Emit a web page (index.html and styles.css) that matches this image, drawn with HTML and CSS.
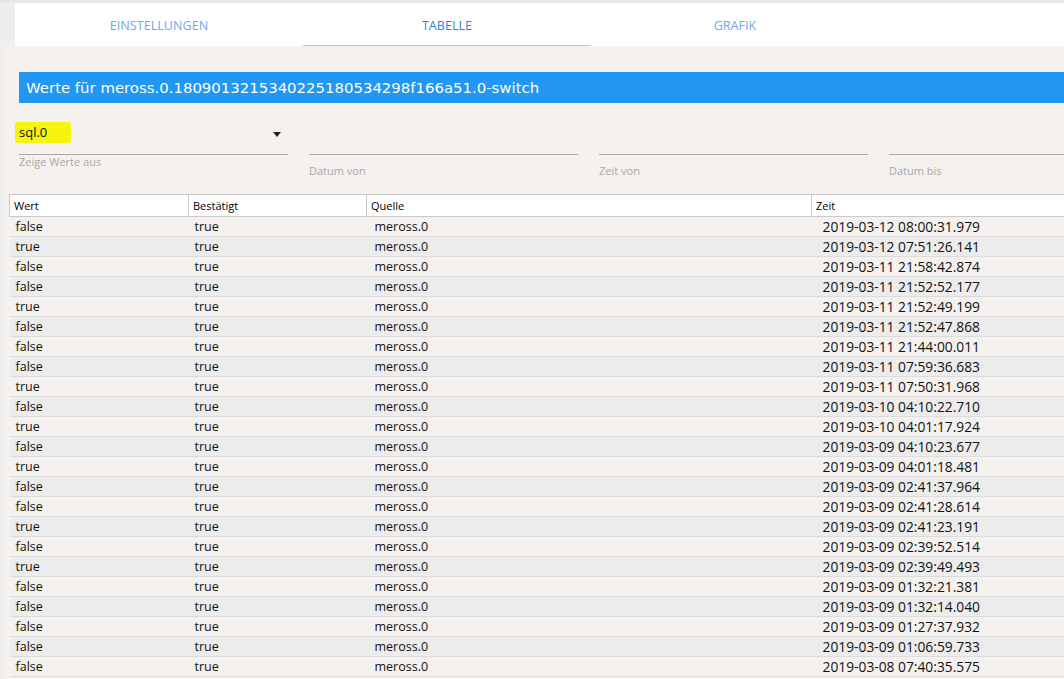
FILE: index.html
```html
<!DOCTYPE html>
<html>
<head>
<meta charset="utf-8">
<link rel="stylesheet" href="styles.css">
</head>
<body>
<div class="top-strip"></div>
<div class="tabs">
  <div class="tab">EINSTELLUNGEN</div>
  <div class="tab active">TABELLE</div>
  <div class="tab">GRAFIK</div>
</div>
<div class="panel">
  <div class="title">Werte für meross.0.1809013215340225180534298f166a51.0-switch</div>
  <div class="filters">
    <div class="field select-field">
      <div class="select-value"><span class="hl">sql.0</span><span class="arrow"></span></div>
      <div class="line"></div>
      <div class="label">Zeige Werte aus</div>
    </div>
    <div class="field">
      <div class="line"></div>
      <div class="label low">Datum von</div>
    </div>
    <div class="field">
      <div class="line"></div>
      <div class="label low">Zeit von</div>
    </div>
    <div class="field">
      <div class="line"></div>
      <div class="label low">Datum bis</div>
    </div>
  </div>
  <div class="table-wrap">
  <table class="grid">
    <colgroup><col class="c1"><col class="c2"><col class="c3"><col class="c4"></colgroup>
    <thead>
      <tr><th>Wert</th><th>Bestätigt</th><th>Quelle</th><th>Zeit</th></tr>
    </thead>
    <tbody>
      <tr><td>false</td><td>true</td><td class="q">meross.0</td><td class="t">2019-03-12 08:00:31.979</td></tr>
      <tr><td>true</td><td>true</td><td class="q">meross.0</td><td class="t">2019-03-12 07:51:26.141</td></tr>
      <tr><td>false</td><td>true</td><td class="q">meross.0</td><td class="t">2019-03-11 21:58:42.874</td></tr>
      <tr><td>false</td><td>true</td><td class="q">meross.0</td><td class="t">2019-03-11 21:52:52.177</td></tr>
      <tr><td>true</td><td>true</td><td class="q">meross.0</td><td class="t">2019-03-11 21:52:49.199</td></tr>
      <tr><td>false</td><td>true</td><td class="q">meross.0</td><td class="t">2019-03-11 21:52:47.868</td></tr>
      <tr><td>false</td><td>true</td><td class="q">meross.0</td><td class="t">2019-03-11 21:44:00.011</td></tr>
      <tr><td>false</td><td>true</td><td class="q">meross.0</td><td class="t">2019-03-11 07:59:36.683</td></tr>
      <tr><td>true</td><td>true</td><td class="q">meross.0</td><td class="t">2019-03-11 07:50:31.968</td></tr>
      <tr><td>false</td><td>true</td><td class="q">meross.0</td><td class="t">2019-03-10 04:10:22.710</td></tr>
      <tr><td>true</td><td>true</td><td class="q">meross.0</td><td class="t">2019-03-10 04:01:17.924</td></tr>
      <tr><td>false</td><td>true</td><td class="q">meross.0</td><td class="t">2019-03-09 04:10:23.677</td></tr>
      <tr><td>true</td><td>true</td><td class="q">meross.0</td><td class="t">2019-03-09 04:01:18.481</td></tr>
      <tr><td>false</td><td>true</td><td class="q">meross.0</td><td class="t">2019-03-09 02:41:37.964</td></tr>
      <tr><td>false</td><td>true</td><td class="q">meross.0</td><td class="t">2019-03-09 02:41:28.614</td></tr>
      <tr><td>true</td><td>true</td><td class="q">meross.0</td><td class="t">2019-03-09 02:41:23.191</td></tr>
      <tr><td>false</td><td>true</td><td class="q">meross.0</td><td class="t">2019-03-09 02:39:52.514</td></tr>
      <tr><td>true</td><td>true</td><td class="q">meross.0</td><td class="t">2019-03-09 02:39:49.493</td></tr>
      <tr><td>false</td><td>true</td><td class="q">meross.0</td><td class="t">2019-03-09 01:32:21.381</td></tr>
      <tr><td>false</td><td>true</td><td class="q">meross.0</td><td class="t">2019-03-09 01:32:14.040</td></tr>
      <tr><td>false</td><td>true</td><td class="q">meross.0</td><td class="t">2019-03-09 01:27:37.932</td></tr>
      <tr><td>false</td><td>true</td><td class="q">meross.0</td><td class="t">2019-03-09 01:06:59.733</td></tr>
      <tr><td>false</td><td>true</td><td class="q">meross.0</td><td class="t">2019-03-08 07:40:35.575</td></tr>
    </tbody>
  </table>
  </div>
</div>
</body>
</html>
```

FILE: styles.css
```css
html, body {
  margin: 0;
  padding: 0;
  height: 100%;
  overflow: hidden;
}
body {
  background: #eeeeee;
  font-family: "Open Sans", "Noto Sans", sans-serif;
  color: #111;
}
.top-strip {
  height: 3px;
  background: #e6e6e6;
}
.tabs {
  display: flex;
  margin-left: 15px;
  height: 43px;
  background: #ffffff;
}
.tab {
  width: 288px;
  box-sizing: border-box;
  text-align: center;
  font-size: 12.6px;
  line-height: 46px;
  color: #6aaaf0;
}
.tab.active {
  color: #2a86e0;
  border-bottom: 1px solid #a5cff6;
}
.panel {
  margin-left: 4px;
  background: #f4f1ee;
  height: 640px;
  padding-top: 26px;
  box-sizing: border-box;
  overflow: hidden;
}
.title {
  margin-left: 15px;
  height: 31px;
  background: #2196f3;
  color: #ffffff;
  font-family: "DejaVu Sans", sans-serif;
  font-size: 14.9px;
  line-height: 33px;
  padding-left: 7px;
  white-space: nowrap;
}
.filters {
  display: flex;
  gap: 21px;
  margin-left: 15px;
  margin-top: 17px;
  height: 74px;
  white-space: nowrap;
}
.field {
  width: 269px;
  flex: none;
  padding-top: 34px;
}
.field.select-field {
  padding-top: 0;
}
.select-value {
  height: 34px;
  position: relative;
  font-size: 13px;
}
.hl {
  position: absolute;
  left: -4px;
  top: 2px;
  background: #f4f40e;
  padding: 0 24px 1px 4px;
  line-height: 20px;
  border-radius: 3px;
}
.arrow {
  position: absolute;
  right: 7px;
  top: 12px;
  width: 0;
  height: 0;
  border-left: 4.5px solid transparent;
  border-right: 4.5px solid transparent;
  border-top: 5px solid #222;
}
.line {
  height: 1px;
  background: #a8a8a8;
}
.label {
  font-size: 11px;
  color: #a9a9a9;
  line-height: 13px;
}
.label.low {
  margin-top: 9px;
}
.table-wrap {
  margin-left: 5px;
}
.grid {
  border-collapse: collapse;
  table-layout: fixed;
  width: 1200px;
  font-size: 12.5px;
}
.c1 { width: 179px; }
.c2 { width: 178px; }
.c3 { width: 445px; }
.c4 { width: 398px; }
.grid th {
  background: #ffffff;
  border: 1px solid #c9c9c9;
  font-weight: normal;
  font-size: 11px;
  text-align: left;
  height: 21px;
  padding: 0 4px;
  line-height: 21px;
  color: #000;
}
.grid td {
  height: 19px;
  line-height: 19px;
  padding: 0 5px 0 6px;
  border-bottom: 1px solid #dcdcdc;
  color: #111;
}
.grid tbody tr:nth-child(even) td {
  background: #ececec;
}
.grid td.q { padding-left: 8px; }
.grid td.t { padding-left: 11px; font-size: 13.8px; }
```
